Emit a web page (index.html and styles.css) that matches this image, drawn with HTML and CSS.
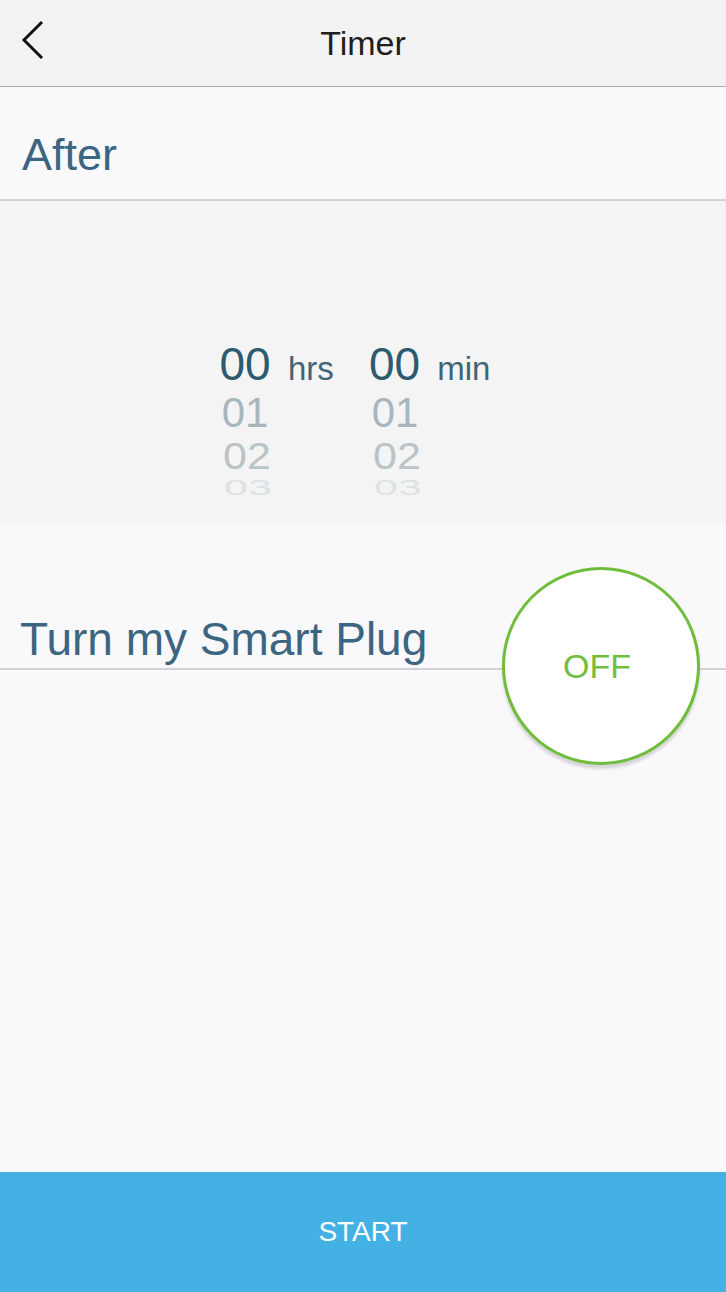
FILE: index.html
```html
<!DOCTYPE html>
<html>
<head>
<meta charset="utf-8">
<link rel="stylesheet" href="styles.css">
</head>
<body>
<div class="app">
  <header class="topbar">
    <svg class="back" width="30" height="44" viewBox="0 0 30 44"><polyline points="21,7 3,25 21,43" fill="none" stroke="#111" stroke-width="3"/></svg>
    <div class="title">Timer</div>
  </header>
  <section class="after">
    <div class="label">After</div>
  </section>
  <section class="picker">
    <div class="wheel">
      <div class="col">
        <div class="row r0"><span class="num">00</span><span class="unit">hrs</span></div>
        <div class="row r1"><span class="num">01</span></div>
        <div class="row r2"><span class="num">02</span></div>
        <div class="row r3"><span class="num">03</span></div>
      </div>
      <div class="col">
        <div class="row r0"><span class="num">00</span><span class="unit">min</span></div>
        <div class="row r1"><span class="num">01</span></div>
        <div class="row r2"><span class="num">02</span></div>
        <div class="row r3"><span class="num">03</span></div>
      </div>
    </div>
  </section>
  <section class="turn">
    <div class="label-row"><div class="label label-lg">Turn my Smart Plug</div></div>
    <div class="toggle">OFF</div>
  </section>
  <button class="start">START</button>
</div>
</body>
</html>
```
FILE: styles.css
```css
html, body {
  margin: 0;
  padding: 0;
}
body {
  font-family: "Liberation Sans", Arial, sans-serif;
  background: #f9f8fa;
}
.app {
  width: 726px;
  height: 1292px;
  display: flex;
  flex-direction: column;
  overflow: hidden;
}
.topbar {
  position: relative;
  height: 86px;
  background: #f3f3f3;
  border-bottom: 1px solid #ababab;
  display: flex;
  align-items: center;
  justify-content: center;
  flex-shrink: 0;
}
.back {
  position: absolute;
  left: 21px;
  top: 15px;
}
.title {
  font-size: 34px;
  line-height: 86px;
  color: #1e1e1e;
}
.after {
  background: #f9f8fa;
  padding: 42px 0 18px 22px;
  border-bottom: 2px solid #d3d3d5;
  flex-shrink: 0;
}
.label {
  font-size: 45px;
  line-height: 52px;
  color: #3b6581;
}
.label-lg {
  font-size: 46px;
}
.picker {
  height: 322px;
  background: #f4f4f5;
  box-sizing: border-box;
  padding-top: 138px;
  flex-shrink: 0;
  overflow: hidden;
}
.wheel {
  display: flex;
  padding-left: 219px;
  gap: 30px;
}
.col {
  display: flex;
  flex-direction: column;
  width: 120px;
}
.row {
  display: flex;
  align-items: baseline;
  gap: 17px;
}
.num {
  display: inline-block;
  width: 52px;
  text-align: center;
}
.r0 {
  height: 50px;
  font-size: 46px;
  line-height: 50px;
  color: #2d5a6e;
}
.r0 .unit {
  font-size: 33px;
  color: #3f6577;
}
.r1 {
  height: 48px;
  font-size: 42px;
  line-height: 48px;
  color: #a7b5bc;
}
.r2 {
  height: 38px;
  font-size: 43px;
  line-height: 38px;
  color: #b9c3c8;
}
.r2 .num {
  transform: scaleY(0.85);
  margin-left: 2px;
}
.r3 {
  height: 24px;
  font-size: 43px;
  line-height: 24px;
  color: #dde2e4;
  overflow: hidden;
}
.r3 .num {
  transform: scaleY(0.5);
  margin-left: 3px;
}
.turn {
  position: relative;
  flex: 1;
  background: #f9f8fa;
  padding-top: 90px;
}
.label-row {
  padding: 0 0 3px 20px;
  border-bottom: 2px solid #d3d3d5;
}
.toggle {
  position: absolute;
  right: 26px;
  top: 44px;
  width: 192px;
  height: 192px;
  box-sizing: content-box;
  border: 3px solid #6fbd3a;
  border-radius: 50%;
  background: #ffffff;
  box-shadow: 0 4px 3px rgba(0, 0, 0, 0.14);
  display: flex;
  align-items: center;
  justify-content: center;
  color: #72be3f;
  font-size: 34px;
  padding-right: 0;
}
.toggle {
  text-indent: -8px;
}
.start {
  height: 120px;
  flex-shrink: 0;
  border: none;
  margin: 0;
  padding: 0;
  background: #44b1e5;
  color: #ffffff;
  font-family: "Liberation Sans", Arial, sans-serif;
  font-size: 28px;
  width: 100%;
}
```
